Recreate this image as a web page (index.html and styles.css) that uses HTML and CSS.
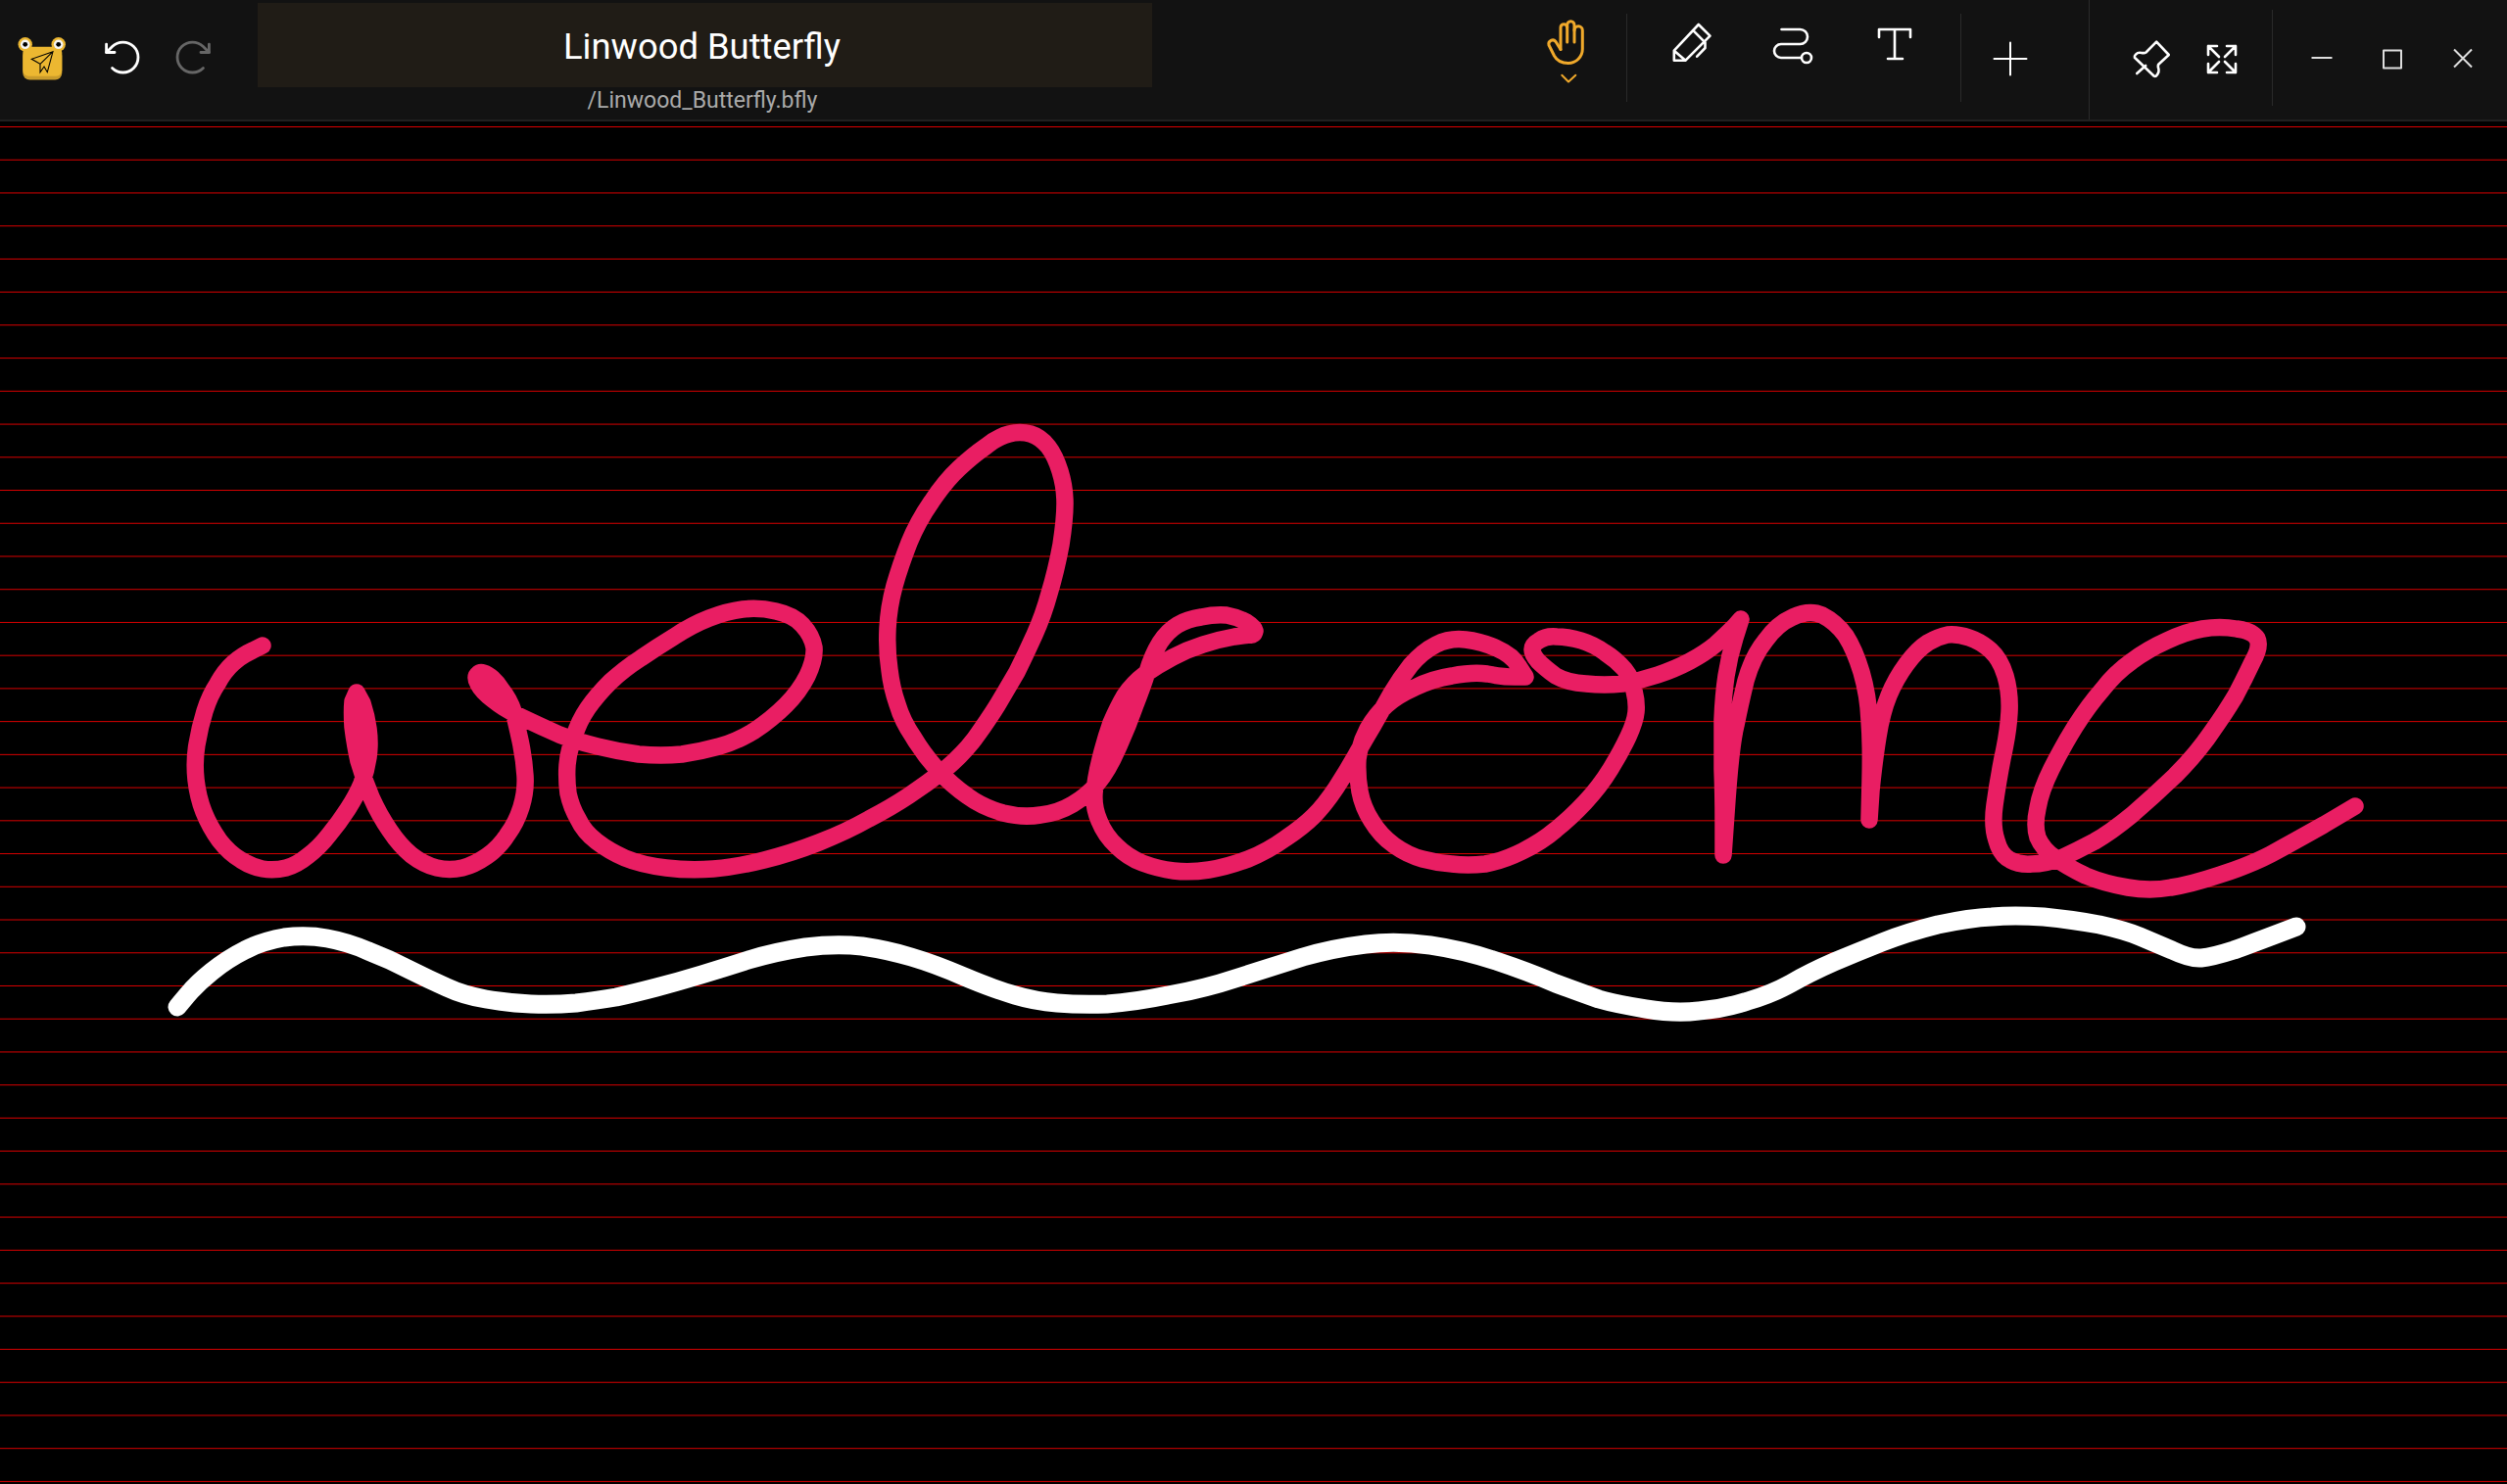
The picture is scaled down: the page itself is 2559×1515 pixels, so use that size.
FILE: index.html
```
<!DOCTYPE html>
<html lang="en">
<head>
<meta charset="utf-8">
<title>Linwood Butterfly</title>
<link rel="stylesheet" href="styles.css">
</head>
<body>
<header class="bar">
  <div class="slot slot-logo">
    <svg class="logo" viewBox="18 35 50 50" aria-hidden="true">
      <circle class="logo-yellow" cx="25.7" cy="45.3" r="7.2"/>
      <circle class="logo-yellow" cx="59.7" cy="45.3" r="7.2"/>
      <rect class="logo-shade" x="23.3" y="50" width="40" height="31.5" rx="7"/>
      <rect class="logo-yellow" x="23.3" y="47.7" width="40" height="30" rx="6"/>
      <circle class="logo-eye" cx="25.7" cy="45.3" r="4.8"/>
      <circle class="logo-eye" cx="59.7" cy="45.3" r="4.8"/>
      <circle class="logo-pupil" cx="25.7" cy="45.3" r="2.4"/>
      <circle class="logo-pupil" cx="59.7" cy="45.3" r="2.4"/>
      <path class="logo-plane" d="M54,52.7 32.3,60.3 41,65.3 41,73.7 45,68 48.3,73.7ZM54,52.7 41,65.3"/>
    </svg>
  </div>
  <div class="slot slot-history">
    <svg class="icon45" viewBox="0 0 256 256" aria-hidden="true"><path d="M79.8,99.7h-48v-48"/><path d="M65.8,190.2a88,88,0,1,0,0-124.4L31.8,99.7"/></svg>
  </div>
  <div class="slot slot-history muted">
    <svg class="icon45" viewBox="0 0 256 256" aria-hidden="true"><path d="M176.2,99.7h48v-48"/><path d="M190.2,190.2a88,88,0,1,1,0-124.4l34,33.9"/></svg>
  </div>
  <div class="title-block">
    <div class="title-field">Linwood Butterfly</div>
    <div class="title-path">/Linwood_Butterfly.bfly</div>
  </div>
  <div class="tools">
    <div class="tool tool-hand">
      <svg class="hand" viewBox="0 0 48 70" aria-hidden="true">
        <path d="M18,30.5 13,22.5a4,4,0,0,0-7,3.5L11.5,37C14.5,42.5,19,44.5,25.8,44.5 33.8,44.5,40.3,38,40.3,30V11a4.15,4.15,0,0,0-8.3,0"/>
        <path d="M18,30.5V8a3.35,3.35,0,0,1,6.7,0V23"/>
        <path d="M24.7,8V5.5a3.65,3.65,0,0,1,7.3,0V23"/>
        <path class="thin" d="M19.3,56.8 26,63.5 33.3,56.8"/>
      </svg>
    </div>
    <span class="divider"></span>
    <div class="tool tool-wide">
      <svg class="icon48" viewBox="0 0 48 48" aria-hidden="true"><path d="M31.8,4 43.5,15.7 18.5,40.7H6.8V30.7ZM26.8,10.7 38.5,22.3M6.8,30.7 18.5,40.7M38.5,22.3V28L30.2,36.7"/></svg>
    </div>
    <div class="tool tool-wide">
      <svg class="icon48" viewBox="0 0 48 48" aria-hidden="true"><path d="M12.5,9H31.5a7.5,7.5,0,0,1,0,15H12a7,7,0,0,0,0,14H32.5"/><circle cx="38" cy="38" r="5"/></svg>
    </div>
    <div class="tool tool-wide">
      <svg class="icon48" viewBox="0 0 48 48" aria-hidden="true"><path d="M8,17V9H40V17M24,9V39M17,39H32"/></svg>
    </div>
    <span class="divider"></span>
    <div class="slot slot-plus">
      <svg class="icon48" viewBox="0 0 48 48" aria-hidden="true"><path class="thin" d="M7.5,24H40.5M24,7.5V40.5"/></svg>
    </div>
    <span class="divider divider-full"></span>
    <div class="slot">
      <svg class="icon48" viewBox="0 0 48 48" aria-hidden="true"><path d="M29.2,6.7 41.8,20 31.5,29.5C30,31,31,33,31.5,35 32,38,29,43,26.8,41.7L6.9,22.8C6,21,9,17.7,12,17.7 14,17.7,16.5,19,18.5,17.5ZM18.2,31 9.2,39"/></svg>
    </div>
    <div class="slot">
      <svg class="icon48" viewBox="0 0 48 48" aria-hidden="true"><path d="M19,11H10V20M10,11 21,22M29,11H38V20M38,11 27,22M19,38H10V29M10,38 21,27M29,38H38V29M38,38 27,27"/></svg>
    </div>
    <span class="divider divider-window"></span>
    <div class="slot window">
      <svg class="icon48" viewBox="0 0 48 48" aria-hidden="true"><path d="M13.5,23H34.5"/></svg>
    </div>
    <div class="slot window">
      <svg class="icon48" viewBox="0 0 48 48" aria-hidden="true"><rect x="15" y="15.5" width="18" height="18"/></svg>
    </div>
    <div class="slot window">
      <svg class="icon48" viewBox="0 0 48 48" aria-hidden="true"><path d="M15,14.5 33,32.5M33,14.5 15,32.5"/></svg>
    </div>
  </div>
</header>
<svg class="canvas" viewBox="0 124 2559 1391" aria-label="welcome, handwritten">
  <path class="rules" d="M0 129.5H2559M0 163.23H2559M0 196.96H2559M0 230.69H2559M0 264.42H2559M0 298.15H2559M0 331.88H2559M0 365.61H2559M0 399.34H2559M0 433.07H2559M0 466.8H2559M0 500.53H2559M0 534.26H2559M0 567.99H2559M0 601.72H2559M0 635.45H2559M0 669.18H2559M0 702.91H2559M0 736.64H2559M0 770.37H2559M0 804.1H2559M0 837.83H2559M0 871.56H2559M0 905.29H2559M0 939.02H2559M0 972.75H2559M0 1006.48H2559M0 1040.21H2559M0 1073.94H2559M0 1107.67H2559M0 1141.4H2559M0 1175.13H2559M0 1208.86H2559M0 1242.59H2559M0 1276.32H2559M0 1310.05H2559M0 1343.78H2559M0 1377.51H2559M0 1411.24H2559M0 1444.97H2559M0 1478.7H2559M0 1512.43H2559"/>
  <path class="ink ink-pink" d="M268,659 L258,664 Q247,669 238,677 Q229,685 222,698 Q214,710 209,726 Q204,742 201,760 Q198,777 200,796 Q202,814 208,829 Q214,844 224,858 Q234,871 246,878 Q257,885 268,887 Q280,889 292,886 Q303,883 314,874 Q326,865 336,852 Q346,840 355,826 Q364,812 369,800 Q374,787 376,773 Q378,759 376,744 Q374,730 370,718 L364,707 L360,716 Q359,726 360,742 Q362,759 366,777 Q371,795 379,814 Q387,832 398,848 Q408,863 420,873 Q433,883 446,886 Q459,889 472,886 Q484,883 497,874 Q510,865 518,852 Q527,840 532,824 Q537,808 536,792 Q535,775 531,756 Q527,738 524,726 Q520,714 512,704 Q505,693 498,689 Q491,685 488,688 Q484,691 488,698 Q492,706 504,715 Q515,724 534,733 Q553,742 571,750 Q589,757 610,762 Q630,767 652,770 Q675,772 696,770 Q716,767 734,762 Q752,757 770,746 Q788,734 802,720 Q816,706 824,690 Q832,673 831,661 Q829,649 819,638 Q810,628 792,624 Q775,620 758,622 Q742,624 724,631 Q706,638 688,650 Q670,661 654,672 Q637,683 623,696 Q609,710 600,723 Q591,736 586,752 Q580,767 579,781 Q578,795 580,810 Q583,824 590,836 Q596,849 609,859 Q622,869 638,876 Q655,883 680,886 Q704,889 728,887 Q752,885 780,878 Q808,871 836,860 Q864,849 887,836 Q910,824 928,812 Q946,800 964,786 Q982,771 995,754 Q1008,736 1018,720 Q1028,703 1038,686 Q1047,668 1056,648 Q1065,628 1071,606 Q1078,583 1083,556 Q1087,530 1087,514 Q1087,497 1082,481 Q1077,465 1070,456 Q1062,446 1052,443 Q1041,440 1030,443 Q1018,446 1006,456 Q993,465 979,478 Q965,491 951,512 Q937,532 928,554 Q919,577 913,598 Q907,620 906,642 Q905,665 908,684 Q910,702 916,719 Q921,736 932,752 Q942,769 957,786 Q972,802 988,813 Q1003,824 1024,830 Q1044,835 1062,832 Q1080,830 1095,821 Q1110,812 1120,800 Q1131,787 1141,764 Q1151,742 1158,722 Q1166,702 1171,686 Q1176,669 1184,656 Q1192,644 1202,638 Q1212,632 1226,630 Q1240,627 1252,628 Q1263,630 1272,635 Q1280,640 1281,644 Q1280,649 1276,648 Q1276,648 1260,650 Q1243,653 1228,658 Q1212,663 1197,671 Q1182,679 1169,688 Q1156,698 1148,710 Q1141,722 1134,738 Q1128,755 1123,775 Q1118,795 1117,810 Q1116,824 1122,838 Q1128,853 1140,864 Q1151,875 1166,881 Q1182,887 1198,889 Q1215,891 1234,888 Q1253,885 1274,877 Q1294,869 1312,856 Q1330,844 1341,833 Q1352,822 1364,804 Q1375,787 1384,771 Q1393,755 1402,740 Q1411,724 1420,708 Q1429,693 1440,679 Q1452,665 1466,658 Q1480,651 1496,653 Q1513,655 1528,662 Q1544,669 1550,680 L1557,691 L1546,691 Q1534,691 1518,688 Q1503,686 1482,690 Q1462,693 1444,702 Q1426,710 1415,720 Q1404,730 1396,744 Q1388,759 1386,775 Q1385,791 1388,808 Q1391,824 1400,838 Q1409,853 1423,863 Q1437,873 1452,877 Q1467,881 1482,882 Q1498,884 1516,882 Q1534,879 1554,869 Q1574,859 1588,847 Q1603,835 1618,819 Q1633,803 1644,785 Q1655,767 1662,752 Q1669,737 1670,727 Q1671,717 1668,705 Q1666,693 1658,683 Q1649,673 1638,666 Q1627,658 1614,654 Q1600,650 1589,650 Q1578,649 1571,654 Q1564,658 1564,663 Q1564,668 1570,675 Q1577,682 1588,690 Q1600,697 1619,698 Q1638,700 1656,698 Q1674,695 1692,689 Q1710,683 1725,675 Q1740,667 1751,658 Q1762,648 1770,640 L1777,632 L1771,651 Q1765,670 1762,690 Q1759,710 1758,735 Q1758,760 1758,785 Q1759,810 1759,840 L1759,873 L1763,816 Q1767,760 1772,740 Q1776,720 1782,695 Q1789,670 1802,654 Q1814,637 1830,630 Q1847,622 1860,628 Q1874,635 1884,649 Q1893,663 1900,686 Q1907,710 1908,735 Q1910,760 1909,798 L1908,837 L1910,807 Q1913,777 1917,752 Q1921,727 1928,710 Q1935,693 1946,678 Q1957,663 1968,656 Q1978,650 1988,648 Q1998,647 2010,651 Q2022,655 2032,664 Q2042,673 2047,690 Q2052,707 2051,727 Q2050,747 2044,774 Q2039,800 2036,822 Q2033,843 2038,858 Q2042,873 2052,878 Q2061,883 2074,882 Q2088,882 2104,876 Q2121,868 2138,859 Q2154,850 2176,832 Q2198,813 2220,792 Q2242,770 2257,748 Q2272,727 2282,710 Q2291,693 2299,676 Q2308,660 2304,652 Q2299,644 2283,642 Q2266,639 2248,642 Q2231,645 2212,654 Q2192,663 2176,675 Q2159,687 2146,704 Q2132,720 2118,742 Q2105,763 2094,785 Q2083,807 2080,825 Q2076,843 2080,855 Q2085,867 2098,876 Q2110,885 2129,894 Q2148,902 2172,906 Q2195,910 2216,906 Q2236,903 2266,893 Q2297,883 2318,872 Q2340,860 2372,842 L2404,823"/>
  <path class="ink ink-white" d="M181,1028 L191,1016 Q201,1004 216,992 Q232,979 250,970 Q267,961 290,957 Q313,954 334,958 Q356,962 376,971 Q397,979 418,990 Q438,1000 456,1008 Q473,1016 496,1020 Q519,1024 542,1025 Q565,1026 588,1024 Q611,1021 629,1018 Q647,1014 670,1008 Q693,1002 716,995 Q739,988 764,980 Q790,972 822,967 Q853,963 880,966 Q907,970 930,977 Q954,984 984,997 Q1015,1010 1036,1016 Q1056,1022 1079,1024 Q1102,1026 1130,1025 Q1158,1023 1192,1016 Q1228,1010 1264,998 Q1299,987 1330,977 Q1361,968 1394,964 Q1425,960 1460,965 Q1494,970 1527,981 Q1560,992 1588,1004 Q1615,1014 1632,1020 Q1649,1025 1680,1030 Q1710,1035 1734,1032 Q1759,1030 1784,1022 Q1808,1015 1828,1004 Q1847,993 1872,982 Q1896,972 1921,962 Q1946,952 1978,944 Q2011,937 2033,936 Q2055,934 2086,936 Q2116,939 2143,944 Q2170,950 2184,956 Q2198,962 2217,970 Q2236,979 2247,978 Q2258,977 2280,970 Q2302,962 2344,946"/>
</svg>
</body>
</html>
```

FILE: styles.css
```
* { box-sizing: border-box; }

html, body {
  margin: 0;
  height: 100%;
  background: #000;
  overflow: hidden;
}

body {
  display: flex;
  flex-direction: column;
  font-family: Roboto, "Liberation Sans", sans-serif;
}

.bar {
  display: flex;
  align-items: flex-start;
  flex: 0 0 124px;
  background: #121212;
  border-bottom: 2px solid #202020;
  padding-left: 6px;
  padding-right: 9px;
  color: #fff;
}

.slot {
  display: flex;
  align-items: center;
  justify-content: center;
  flex: 0 0 72px;
  height: 119px;
}

.slot-logo {
  flex-basis: 74px;
  margin-right: 10px;
}

.slot-history {
  flex-basis: 71px;
  height: 117px;
}

.slot-plus {
  margin-left: 14px;
  margin-right: 44px;
}

.muted { color: #666; }

svg {
  display: block;
  fill: none;
  stroke: currentColor;
  stroke-linecap: round;
  stroke-linejoin: round;
}

.icon45 {
  width: 45px;
  height: 45px;
  stroke-width: 16;
}

.icon48 {
  width: 48px;
  height: 48px;
  stroke-width: 2.6;
}

.thin { stroke-width: 2; }

.logo {
  width: 50px;
  height: 50px;
  stroke: none;
}

.logo-yellow { fill: #ecb731; }
.logo-shade { fill: #c99b2b; }
.logo-eye { fill: #f4f4f4; }
.logo-pupil { fill: #000; }

.logo-plane {
  fill: none;
  stroke: #000;
  stroke-width: 1.1;
  stroke-linejoin: miter;
}

.title-block {
  display: flex;
  flex-direction: column;
  align-items: center;
  flex: 0 0 913px;
  margin-left: 31px;
  margin-top: 3px;
}

.title-field {
  align-self: stretch;
  height: 86px;
  padding-right: 6px;
  background: #201c16;
  font-size: 36.4px;
  line-height: 89px;
  text-align: center;
}

.title-path {
  margin-top: 0.5px;
  margin-right: 5px;
  font-size: 23px;
  line-height: 26px;
  color: #aaa;
}

.tools {
  display: flex;
  align-items: flex-start;
  margin-left: auto;
}

.tool {
  display: flex;
  justify-content: center;
  align-items: center;
  height: 90px;
}

.tool-hand {
  flex: 0 0 72px;
  align-items: flex-start;
  padding-top: 20px;
  color: #f0a92b;
}

.hand {
  width: 48px;
  height: 70px;
  stroke-width: 3;
}

.tool-wide { flex: 0 0 104px; }

.divider {
  flex: 0 0 1px;
  height: 90px;
  margin: 14px 13px 0 25px;
  background: #2a2a2a;
}

.tool-wide + .divider { margin: 14px 0 0 15px; }

.divider-full {
  height: 122px;
  margin: 0 27px 0 0;
}

.divider-window {
  height: 98px;
  margin: 10px 14px 0 15px;
}

.window { color: #ddd; }
.window .icon48 { stroke-width: 2; stroke-linecap: butt; }

.canvas {
  flex: 1 1 auto;
  width: 2559px;
  height: 1391px;
  background: #000;
}

.rules {
  stroke: #d80000;
  stroke-width: 1;
  stroke-linecap: butt;
}

.ink { stroke-linecap: round; stroke-linejoin: round; }
.ink-pink { stroke: #e91e63; stroke-width: 17.5; }
.ink-white { stroke: #fff; stroke-width: 19; }
```
